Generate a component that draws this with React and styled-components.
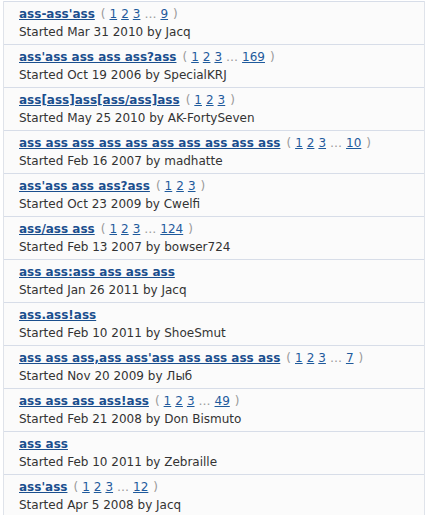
import React from 'react'
import styled, { createGlobalStyle } from 'styled-components'

const GlobalStyle = createGlobalStyle`
  html, body {
    margin: 0;
    padding: 0;
    background: #ffffff;
  }
  body {
    font-family: 'DejaVu Sans', Verdana, sans-serif;
    font-size: 12px;
    color: #222222;
  }
`

const List = styled.ul`
  list-style: none;
  margin: 1px 0 0 3px;
  padding: 0;
  width: 420px;
  border-left: 1px solid #dfe3ea;
  border-right: 1px solid #dfe3ea;
  background: #fbfbfb;
`

const Row = styled.li`
  border-top: 1px solid #d7dde8;
  padding: 3px 0 3px 15px;
  height: 36px;
  line-height: 18px;
`

const TitleLine = styled.div`
  white-space: nowrap;
`

const Title = styled.a`
  font-weight: bold;
  color: #1b4f8e;
  text-decoration: underline;
`

const Pages = styled.span`
  color: #999999;
  margin-left: 6px;
`

const PageLink = styled.a`
  color: #1f5a9c;
  text-decoration: underline;
  margin-left: 4px;
`

const Dots = styled.span`
  color: #999999;
  margin-left: 4px;
`

const Close = styled.span`
  margin-left: 5px;
`

const Meta = styled.div`
  color: #333333;
`

const topics = [
  { title: "ass-ass'ass", pages: ['1', '2', '3'], last: '9', date: 'Mar 31 2010', by: 'Jacq' },
  { title: "ass'ass ass ass ass?ass", pages: ['1', '2', '3'], last: '169', date: 'Oct 19 2006', by: 'SpecialKRJ' },
  { title: 'ass[ass]ass[ass/ass]ass', pages: ['1', '2', '3'], date: 'May 25 2010', by: 'AK-FortySeven' },
  { title: 'ass ass ass ass ass ass ass ass ass ass', pages: ['1', '2', '3'], last: '10', date: 'Feb 16 2007', by: 'madhatte' },
  { title: "ass'ass ass ass?ass", pages: ['1', '2', '3'], date: 'Oct 23 2009', by: 'Cwelfi' },
  { title: 'ass/ass ass', pages: ['1', '2', '3'], last: '124', date: 'Feb 13 2007', by: 'bowser724' },
  { title: 'ass ass:ass ass ass ass', date: 'Jan 26 2011', by: 'Jacq' },
  { title: 'ass.ass!ass', date: 'Feb 10 2011', by: 'ShoeSmut' },
  { title: "ass ass ass,ass ass'ass ass ass ass ass", pages: ['1', '2', '3'], last: '7', date: 'Nov 20 2009', by: 'Лыб' },
  { title: 'ass ass ass ass!ass', pages: ['1', '2', '3'], last: '49', date: 'Feb 21 2008', by: 'Don Bismuto' },
  { title: 'ass ass', date: 'Feb 10 2011', by: 'Zebraille' },
  { title: "ass'ass", pages: ['1', '2', '3'], last: '12', date: 'Apr 5 2008', by: 'Jacq' }
]

const Topic = ({ topic }) => (
  <Row>
    <TitleLine>
      <Title href='#'>{topic.title}</Title>
      {topic.pages && (
        <Pages>
          (
          {topic.pages.map((p) => (
            <PageLink key={p} href='#'>{p}</PageLink>
          ))}
          {topic.last && (
            <>
              <Dots>…</Dots>
              <PageLink href='#'>{topic.last}</PageLink>
            </>
          )}
          <Close>)</Close>
        </Pages>
      )}
    </TitleLine>
    <Meta>
      Started {topic.date} by {topic.by}
    </Meta>
  </Row>
)

const App = () => (
  <>
    <GlobalStyle />
    <List>
      {topics.map((t, i) => (
        <Topic key={i} topic={t} />
      ))}
    </List>
  </>
)

export default App
